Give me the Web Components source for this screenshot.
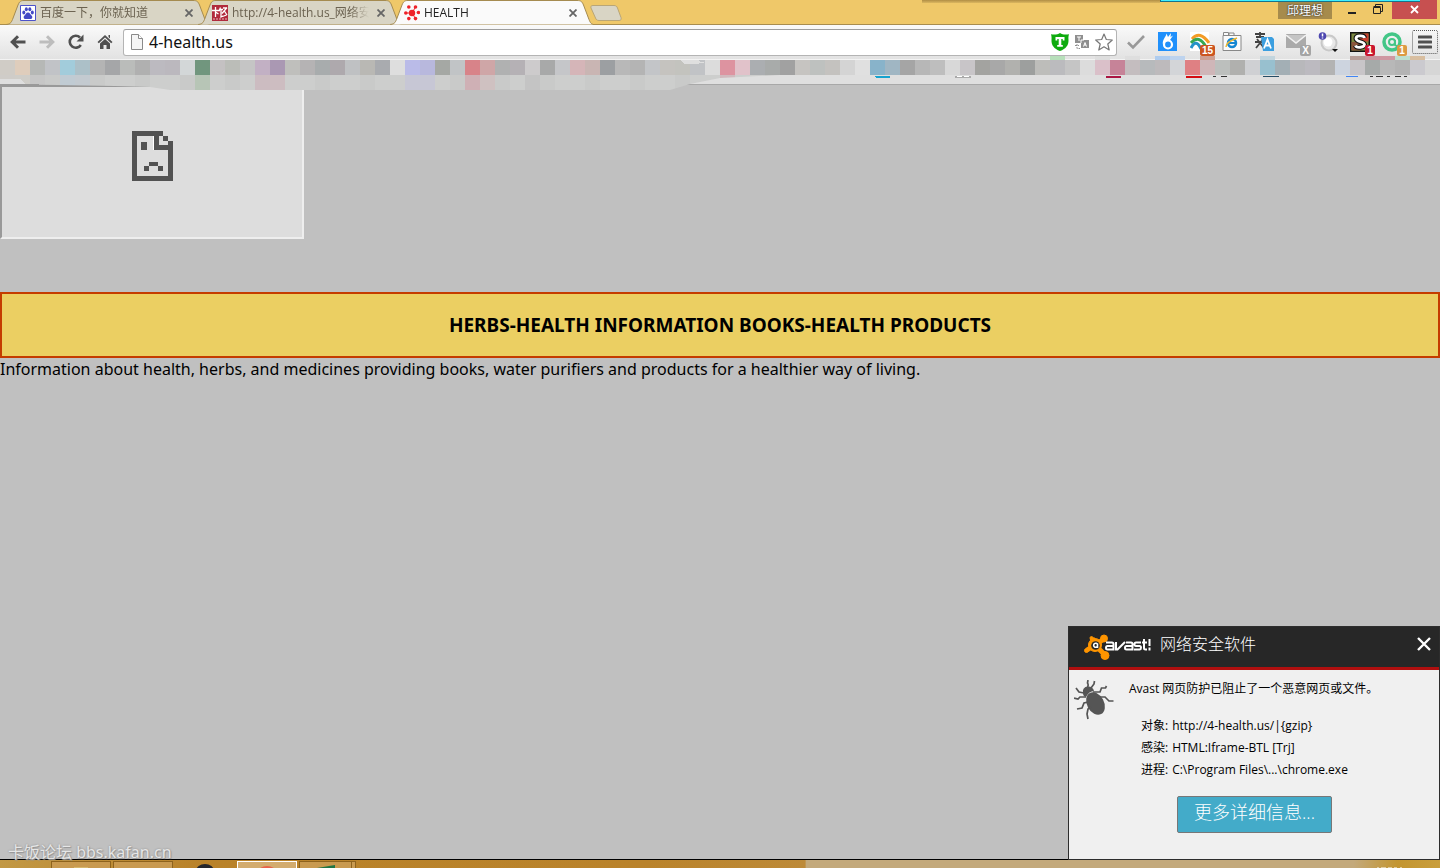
<!DOCTYPE html>
<html lang="zh-CN">
<head>
<meta charset="utf-8">
<title>HEALTH</title>
<style>
html, body { margin: 0; height: 100%; overflow: hidden; background: #c0c0c0; font-family: "Open Sans", "Noto Sans CJK SC", sans-serif; }
</style>
</head>
<body>
<browser-window></browser-window>
<script>
const define = (name, html, setup) => {
  const tpl = document.createElement('template');
  tpl.innerHTML = html;
  customElements.define(name, class extends HTMLElement {
    constructor() {
      super();
      this.attachShadow({ mode: 'open' }).append(tpl.content.cloneNode(true));
    }
    connectedCallback() { if (setup) setup(this, this.shadowRoot); }
  });
};

/* One tab of the strip: slots for the favicon and the title. */
define('browser-tab', `
<style>
:host { display: grid; grid-template-columns: 100%; width: 203px; height: 25px; margin-right: -11px; flex: none; --fill: #d9d5c5; color: #6b6250; position: relative; }
:host([active]) { --fill: #fafafa; color: #222; z-index: 2; }
.shape, .row { grid-area: 1 / 1; }
.shape { display: block; fill: var(--fill); stroke: #a58b50; }
.row { display: flex; align-items: center; gap: 4px; padding: 0 12px 0 14px; z-index: 1; }
.title { flex: 1; font-size: 12px; line-height: 24px; white-space: nowrap; overflow: hidden; -webkit-mask: linear-gradient(90deg, #000 86%, transparent); mask: linear-gradient(90deg, #000 86%, transparent); }
button { border: 0; padding: 0; background: none; width: 16px; height: 16px; color: #666; display: grid; place-items: center; }
::slotted(svg) { width: 16px; height: 16px; display: block; flex: none; }
</style>
<svg class="shape" width="203" height="25" viewBox="0 0 203 25"><path d="M-1 24.500C4 24.500 5 23 6.500 19.500L12 5C13.500 1.500 14.500.5 18 .5H187C191 .5 192 1.500 193.500 5L199 19.500C200.500 23 201 24.500 205 24.500"/></svg>
<div class="row"><slot name="icon"></slot><span class="title"><slot></slot></span>
<button aria-label="关闭标签页"><svg width="8" height="8" viewBox="0 0 8 8"><path d="M.5.5l7 7M7.500.5l-7 7" stroke="currentColor" stroke-width="1.800"/></svg></button></div>`);

define('window-controls', `
<style>
:host { display: flex; align-items: flex-start; height: 25px; padding-right: 3px; position: relative; z-index: 3; }
button { border: 0; padding: 0; margin: 0; background: none; height: 19px; width: 26px; display: grid; place-items: center; }
.user { width: 54px; background: #a68b4c; color: #fff; font: 12px/18px "Noto Sans CJK SC", sans-serif; text-shadow: 0 0 2px #333, 0 0 1px #333; margin-right: 7px; }
.close { width: 45px; background: #c75050; margin-left: 1px; }
</style>
<button class="user">邱理想</button>
<button aria-label="最小化"><svg width="10" height="12"><path d="M1 8h8v2h-8z" fill="#222"/></svg></button>
<button aria-label="还原"><svg width="11" height="11" fill="none" stroke="#222"><path d="M.5 3.500h7v6h-7zM.5 2.500h7M2.500 2V.5h7v7H8"/></svg></button>
<button class="close" aria-label="关闭"><svg width="9" height="9"><path d="M1 1l7 7M8 1l-7 7" stroke="#fff" stroke-width="1.800"/></svg></button>`);

define('tab-strip', `
<style>
:host { display: flex; height: 25px; background: #efc869; padding-left: 6px; position: relative; box-sizing: border-box; box-shadow: inset 0 -1px #a98d4e; }
.new { border: 0; background: none; padding: 0; margin: 5px 0 0 11px; width: 32px; height: 16px; }
.new svg { display: block; margin-left: -3px; }
.gap { flex: 1; }
.edge { position: absolute; right: 20px; top: 0; width: 260px; height: 2px; box-sizing: border-box; background: #3ff0ff; border-bottom: 1px solid #17738a; border-left: 1px solid #17738a; z-index: 4; }
.shade { position: absolute; right: 280px; top: 0; width: 238px; height: 3px; background: linear-gradient(#b08e45, #dcb760); }
</style>
<browser-tab><svg slot="icon" viewBox="0 0 16 16"><path d="M.5.5h15v15H.5z" fill="#fff" stroke="#4d52c9"/><g fill="#4349c5"><ellipse cx="3.800" cy="7.500" rx="1.500" ry="2"/><ellipse cx="6.300" cy="4.300" rx="1.500" ry="2"/><ellipse cx="9.800" cy="4.300" rx="1.500" ry="2"/><ellipse cx="12.300" cy="7.500" rx="1.500" ry="2"/><path d="M8 7.500c2 0 2 1.800 3.500 3 1.500 1.300.8 3.600-1 3.600H5.500c-1.800 0-2.500-2.300-1-3.600C6 9.300 6 7.500 8 7.500z"/></g></svg>百度一下，你就知道</browser-tab>
<browser-tab><svg slot="icon" viewBox="0 0 16 16"><path d="M0 0h16v16H0z" fill="#b12a3c"/><path d="M0 5.500h8M3.500 2v10M3.500 7l3 2M8.500 2.500L7 6M8 4.500h3M9 5v7l2-1M11 3h4M15 2.500L10 8.500M12 5.500l3 4.500M10.500 11.500l4-1.500" fill="none" stroke="#fff" stroke-width="1.300"/><path d="M1 14h14" stroke="#e9b9be" stroke-dasharray="2 1"/></svg>http://4-health.us_网络安</browser-tab>
<browser-tab active><svg slot="icon" viewBox="0 0 16 16" fill="#ee2229"><circle cx="8" cy="8" r="3.200"/><circle cx="4.800" cy="2" r="1.800"/><circle cx="11.500" cy="2" r="1.800"/><circle cx="1.800" cy="8" r="1.800"/><circle cx="14.400" cy="7.500" r="1.800"/><circle cx="4.800" cy="13.600" r="1.800"/><circle cx="11.500" cy="13.600" r="1.800"/><path d="M8 8l3.500-6M8 8L1.800 8M8 8l3.500 5.600" stroke="#ee2229"/></svg>HEALTH</browser-tab>
<button class="new" aria-label="新标签页"><svg width="32" height="16"><path d="M3 .5H24C26 .5 27 1.500 27.500 3L31 12.500C31.500 14.500 31 15.500 29 15.500H9C7 15.500 6 14.500 5.500 13L1 3C.5 1.500 1 .5 3 .5z" fill="#d9d5c5" stroke="#b9a677"/></svg></button>
<span class="gap"></span><window-controls></window-controls><span class="shade"></span><span class="edge"></span>`);

define('omni-box', `
<style>
:host { display: flex; align-items: center; flex: 1; min-width: 0; height: 27px; box-sizing: border-box; border: 1px solid #b4b4b4; border-top-color: #9d9d9d; border-radius: 3px; background: #fff; padding: 0 1px 0 7px; }
input { flex: 1; min-width: 0; border: 0; outline: 0; background: none; padding: 0; margin-left: 6px; height: 25px; font: 16px/24px "Noto Sans", sans-serif; color: #111; }
button { border: 0; background: none; padding: 0; display: grid; place-items: center; width: 22px; height: 22px; }
</style>
<svg width="12" height="16" viewBox="0 0 12 16"><path d="M.5.5h7l4 4v11H.5z" fill="#f5f5f5" stroke="#8a8a8a"/><path d="M7.500.5v4h4" fill="#fff" stroke="#8a8a8a"/></svg>
<input aria-label="地址" value="4-health.us">
<button aria-label="信任"><svg width="18" height="18" viewBox="0 0 18 18"><path d="M9 0c2.500 1.500 5 2 9 1.200-.5 1.500-.7 3-.5 5.500.3 5.500-2.500 9-8.500 11.300C3 15.700.2 12.200.5 6.700.7 4.200.5 2.700 0 1.200 4 2 6.500 1.500 9 0z" fill="#0eab0e"/><path d="M4.500 4h9v3.500h-1.800V6h-1.400v6h1.500v1.800H6.200V12h1.500V6H6.300v1.500H4.500z" fill="#fff"/></svg></button>
<button aria-label="翻译"><svg width="14" height="14" viewBox="0 0 14 14"><path d="M0 0h8v8H0zM6 5h8v8H6z" fill="#8f8f8f"/><path d="M6 8V5h3" stroke="#fff" fill="none"/><path d="M2 2h4M4 2v4M8.500 11.500L10 7.500l1.500 4M9 10h2" stroke="#fff" fill="none"/><path d="M0 10.500h4M2 9v4.500h3" stroke="#8f8f8f" fill="none" stroke-dasharray="2 1"/></svg></button>
<button aria-label="收藏"><svg width="18" height="18" viewBox="0 0 18 18"><path d="M9 1l2.300 5.500 6 .5-4.500 4 1.400 6L9 13.800 3.800 17l1.400-6L.7 7l6-.5z" fill="#fff" stroke="#777" stroke-width="1.200" stroke-linejoin="round"/></svg></button>`);

define('extension-button', `
<style>
:host { display: block; position: relative; width: 32px; height: 24px; flex: none; }
button { border: 0; background: none; padding: 0; width: 100%; height: 100%; display: grid; place-items: center; }
.badge { position: absolute; right: 1px; bottom: -2px; min-width: 6px; padding: 0 2px; border-radius: 2px; font: bold 10px/11px "Liberation Sans", sans-serif; text-align: center; color: #fff; background: var(--badge, #999); }
.badge:empty { display: none; }
</style><button><slot></slot></button><span class="badge"></span>`, (host, root) => {
  root.querySelector('.badge').textContent = host.getAttribute('badge') || '';
  root.querySelector('button').setAttribute('aria-label', host.getAttribute('label'));
});

define('tool-bar', `
<style>
:host { display: flex; align-items: center; height: 35px; box-sizing: border-box; padding: 0 2px 0 3px; background: linear-gradient(#fafafa, #e2e2e2); border-bottom: 1px solid #f3f3f3; }
.nav { border: 0; background: none; padding: 0; width: 29px; height: 24px; display: grid; place-items: center; }
omni-box { margin: 0 3px 0 4px; }
.menu { border: 1px dotted #555; background: none; border-radius: 2px; padding: 0; width: 26px; height: 24px; margin-left: 4px; display: grid; place-items: center; }
</style>
<button class="nav" aria-label="后退"><svg width="16" height="14" fill="none" stroke="#505050" stroke-width="3"><path d="M15.500 7H3M8 1.200L2.200 7 8 12.800"/></svg></button>
<button class="nav" aria-label="前进"><svg width="16" height="14" fill="none" stroke="#bdbdbd" stroke-width="3"><path d="M.5 7H13M8 1.200L13.800 7 8 12.800"/></svg></button>
<button class="nav" aria-label="重新加载"><svg width="16" height="16"><path d="M12.800 11A6 6 0 1 1 12 3.500" fill="none" stroke="#505050" stroke-width="2.600"/><path d="M15.500.5v7h-7z" fill="#505050"/></svg></button>
<button class="nav" aria-label="主页"><svg width="16" height="16" fill="#505050"><path d="M8 1l7.500 7-1.300 1.300L8 3.600 1.800 9.300.5 8zM11.500 1H13v3.500l-1.500-1.500z"/><path d="M8 5l5 4.500V15H9.500v-4h-3v4H3V9.500z"/></svg></button>
<omni-box></omni-box>
<extension-button label="勾选"><svg width="20" height="18"><path d="M2 9.500l5 5L18 3" fill="none" stroke="#999" stroke-width="2.600"/></svg></extension-button>
<extension-button label="火焰"><svg width="20" height="20"><path d="M0 0h19v19H0z" fill="#2090fb"/><circle cx="10" cy="12.500" r="4" fill="none" stroke="#fff" stroke-width="2.200"/><path d="M4.800 12C4.500 7 8 5 8.500 1.500L10 5l3-4-.5 4L15 3.500 12 8 8 9.500z" fill="#fff"/></svg></extension-button>
<extension-button label="彩虹" badge="15" style="--badge:#cc5520"><svg width="20" height="20" fill="none" stroke-width="3"><path d="M0 0h19v19H0z" fill="#fff"/><path d="M2 7Q10-2 19 11" stroke="#f39b25"/><path d="M1 11Q9 2 16 15" stroke="#36a852"/><path d="M1 16Q6 6 11 17" stroke="#2592c8"/></svg></extension-button>
<extension-button label="IE 标签"><svg width="20" height="20"><path d="M1 3.500h18v15H1zM1.500 3V.5h5V3M7 3V1h5v2" fill="#fafafa" stroke="#888"/><circle cx="10" cy="11" r="4" fill="none" stroke="#1687d2" stroke-width="2.500"/><path d="M7 11h7" stroke="#1687d2" stroke-width="2"/><path d="M4 15Q4 10 15 6" fill="none" stroke="#f0b72d" stroke-width="1.500"/></svg></extension-button>
<extension-button label="翻译"><svg width="20" height="20"><path d="M1 2h10M6 0v5M2 5h8M3 7l7 9M10 6L2 16M1 10h9" stroke="#444" stroke-width="1.800" fill="none"/><path d="M7 5h11l2 2v12H9z" fill="#3c9fe0"/><path d="M10 16.500l3.500-9 3.500 9M11.500 13.500h4" stroke="#fff" stroke-width="1.800" fill="none"/></svg></extension-button>
<extension-button label="邮件" badge="X" style="--badge:#a5a5a5"><svg width="20" height="20"><path d="M0 2h20v14H0z" fill="#aaa"/><path d="M0 3l10 8 10-8" fill="#c5c5c5" stroke="#f2f2f2" stroke-width="1.500"/></svg></extension-button>
<extension-button label="代理"><svg width="20" height="20"><circle cx="11" cy="11" r="7.500" fill="#e8e8e8" stroke="#c8c8c8" stroke-width="2"/><circle cx="10" cy="10" r="4.500" fill="#fff"/><circle cx="4.500" cy="4" r="3.800" fill="#4d47b0"/><path d="M4.500 1.500v3M4.500 5.500v1" stroke="#fff" stroke-width="1.500"/><path d="M14 17h6l-3 3z" fill="#111"/></svg></extension-button>
<extension-button label="脚本" badge="1" style="--badge:#c9152e"><svg width="20" height="20"><path d="M.7.7h18.600v18.600H.7z" fill="#7d8a42" stroke="#111" stroke-width="1.500"/><path d="M10 1.500h8.500v8H10z" fill="#c9402e"/><path d="M1.500 10H10v8.500H1.500z" fill="#8a553a"/><path d="M14.500 6C14 3 6 3 6 6.500s8.500 3 8.500 6-8 4-9 1" fill="none" stroke="#111" stroke-width="5"/><path d="M14.500 6C14 3 6 3 6 6.500s8.500 3 8.500 6-8 4-9 1" fill="none" stroke="#fff" stroke-width="2.800"/></svg></extension-button>
<extension-button label="网络" badge="1" style="--badge:#dc9a42"><svg width="20" height="20"><circle cx="10" cy="10" r="8" fill="none" stroke="#43c687" stroke-width="3.500"/><circle cx="10" cy="10" r="3" fill="none" stroke="#43c687" stroke-width="2"/><path d="M13 8v5l5 3" fill="none" stroke="#43c687" stroke-width="2"/></svg></extension-button>
<button class="menu" aria-label="菜单"><svg width="14" height="14"><path d="M1 2h12M1 7h12M1 12h12" stroke="#505050" stroke-width="3" stroke-linecap="round"/></svg></button>`);

/* Bookmarks bar, with a pixelated strip drawn over its entries. */
define('bookmarks-bar', `
<style>
:host { display: block; height: 25px; box-sizing: border-box; background: #dfdfdf; border-bottom: 1px solid #a8a8a8; position: relative; z-index: 2; }
svg { position: absolute; left: 0; top: -4px; width: 1440px; height: 36px; }
</style>
<svg viewBox="0 56 1440 36" shape-rendering="crispEdges"><defs><clipPath id="c"><path d="M0 75H780L720 78 690 84 670 90H170L150 87 115 86 0 84z"/></clipPath></defs>
<g id="top"></g><g id="low" clip-path="url(#c)"></g>
<path d="M0 79h20l5 5H0z" fill="#dedede"/><path d="M0 84h39v1h8v1H0z" fill="#999"/>
<path d="M680 60h18l3 2h5l-10 2h-11z" fill="#dfdfdf"/>
<path d="M874 76h16v2h-14z" fill="#16a3cf"/><path d="M955 76h16v2h-16z" fill="#aaa"/><path d="M957 76h5v1h-5zM964 76h5v1h-5z" fill="#fff"/><path d="M1106 76h15v2h-15z" fill="#ab1543"/><path d="M1186 76h16v2h-16z" fill="#d50c12"/><path d="M1263 76h16v1h-16z" fill="#254d66"/><path d="M1346 76h12v1h-12z" fill="#4285f4"/>
<path d="M1213 76h3m5 0h6m143 0h3m3 0h7m4 0h3m5 0h6m3 0h3" stroke="#333" stroke-width="1"/></svg>`, (host, root) => {
  const top = 'd0ccc6 dfcdbc b6b8b6 c1c3c7 a2ccdb acc0c8 b4b4b4 a5a6a8 babcba b0b0b0 bcbac0 bbb8be d3d7d8 71967e c4c1c2 bbbdb8 c5c5c5 c2b0c4 aa98b3 bfbfbc b5b3b4 a8acad aea9ad bfc1c3 b9b8b4 a9abaf dedede babbe8 b8b8dd a5a8a4 c1c4c6 d88389 cfa6a7 b0b1b1 b5b1b5 cdcbcc a8a9a9 c5c6c9 d5b5b8 c9b5b3 9c9fa2 b8b8b8 b4b4b4 c3c5c8 c5c3bf c3c3be c1c3c6 dcdcdc dd93a0 e1c2ca abaeb1 a8abaa a1a1a1 c6c4c1 bec1bf c4c2bf d4d4d4 e0e0e0 88b3ca a0b6c3 a5a5a5 b7b7b7 bebebe d8d8d8 c8c5c8 a3a3a0 a8a8a8 b1b1ae 9d9f9e bdbdba bbbbbe c5c5c5 dcdcdc dac0c9 c68398 c4bdbf b7babc bdbabc d3d5d8 df8083 cfb6b8 bcbfbd b0b0ae cfd0d3 98c0cf a3afb5 b8b8bb bcbac0 b3b3b3 cdd4df c8c5c8 a6aaa9 b8b8b8 b3b3b3 cbcacf d6d6d6'.split(' ');
  const low = { 0: 'cfccc8', 1: 'cfcdc8', 2: 'c6c6c6', 4: 'c0cbd3', 5: 'c3cad0', 13: 'b7c5b6', 17: 'ccbcc1', 18: 'cdbdc1', 27: 'c7c7d5', 28: 'c7c7d5', 31: 'cfb0b5', 32: 'cfc1c1', 35: 'c4c4c4', 48: 'd0b9bd' };
  const above = { 70: 'b7dfba', 73: 'dedede', 75: 'dedede', 77: 'aeccef', 78: 'bdd3ee', 80: 'cf9f92', 84: 'c2d5de', 90: 'b69d98', 91: 'c9959f', 92: 'cf97a2', 93: 'bddfce', 94: 'd8bea0' };
  const cell = (x, y, h, c) => `<rect x="${x * 15}" y="${y}" width="15" height="${h}" fill="#${c}"/>`;
  root.getElementById('top').innerHTML = top.map((c, i) => cell(i, 60, 15, c)).join('') + Object.entries(above).map(([i, c]) => cell(+i, 56, 4, c)).join('');
  root.getElementById('low').innerHTML = top.map((c, i) => cell(i, 75, 15, low[i] || (i % 3 ? 'cdcecd' : 'c9cac9'))).join('');
});

define('broken-frame', `
<style>
:host { display: grid; place-items: center; width: 300px; height: 150px; background: #ddd; border: 2px solid; border-color: #999 #eee #eee #999; }
svg { display: block; margin-bottom: 12px; }
</style>
<svg width="41" height="50" viewBox="0 0 41 50" shape-rendering="crispEdges"><path fill="#525252" fill-rule="evenodd" d="M0 0H31V5H36V10H41V50H0zM5 5V45H36V19H22V5zM27 5V14H36V10H31V5z"/><path fill="#525252" d="M9 11h6v8H9zM17 31h9v4h-9zM12 35h5v5h-5zM26 35h5v5h-5z"/><path fill="#fff" d="M21 5h1v14h-1z"/></svg>`);

define('health-page', `
<style>
:host { display: block; flex: 1; min-height: 0; overflow: hidden; background: #c0c0c0; color: #000; font-family: "Noto Sans", sans-serif; }
.box { margin-top: 53px; border: 2px solid #c43c00; background: #ebcf62; padding: 19px 0; text-align: center; }
h3 { margin: 0; font-size: 19px; line-height: 24px; font-weight: 700; }
p { margin: 0; font-size: 16px; line-height: 22px; }
</style>
<broken-frame></broken-frame>
<div class="box"><h3>HERBS-HEALTH INFORMATION BOOKS-HEALTH PRODUCTS</h3></div>
<p>Information about health, herbs, and medicines providing books, water purifiers and products for a healthier way of living.</p>`);

define('avast-alert', `
<style>
:host { display: block; position: absolute; right: 0; bottom: 8px; width: 372px; height: 234px; box-sizing: border-box; border: 1px solid #2d2d2d; background: #f0f0f0; color: #000; z-index: 5; font: 12px/22px "Open Sans", "Noto Sans CJK SC", sans-serif; }
header { display: flex; align-items: center; height: 40px; background: #272727; border-bottom: 3px solid #b00f0f; color: #fff; padding: 0 8px 0 15px; }
header h2 { margin: 0 0 8px 9px; flex: 1; font: 300 16px/24px "Noto Sans CJK SC", sans-serif; }
button { border: 0; background: none; padding: 0; font: inherit; color: inherit; }
.x { margin-bottom: 6px; display: block; }
.x svg, header > svg { display: block; }
main { display: grid; grid-template-columns: 60px 1fr; padding-top: 8px; }
main > svg { margin: 2px 0 0 5px; }
p { margin: 0; }
dl { display: grid; grid-template-columns: auto 1fr; gap: 0 4px; margin: 15px 0 0 12px; }
dt, dd { margin: 0; line-height: 22px; }
.more { display: block; width: 155px; height: 37px; margin: 15px 0 0 48px; padding-bottom: 6px; background: #43abc9; border: 1px solid #777; border-radius: 2px; color: #fff; font: 300 18px/28px "Open Sans", "Noto Sans CJK SC", sans-serif; }
</style>
<header>
<svg width="67" height="27" viewBox="0 0 67 27"><g fill="#ff9500" stroke="#ff9500"><circle cx="11" cy="11" r="6.500"/><circle cx="20" cy="4.500" r="3.500"/><circle cx="21" cy="21.500" r="4"/><circle cx="2.500" cy="16.500" r="2"/><circle cx="7.500" cy="4" r="1.500"/><path d="M11 11l9-6M12 12l8 8M11 11L3 16M11 11L8 4" stroke-width="5"/></g><circle cx="11.500" cy="11.500" r="4.300" fill="#272727"/><path d="M13.500 9.500v4.500M13.500 12a2 2 0 1 1 0-1.500" stroke="#fff" stroke-width="1.600" fill="none"/>
<g fill="none" stroke="#fff" stroke-width="2"><path d="M22 8.500h6q1.500 0 1.500 1.500v5.500h-6q-1.500 0-1.500-1.500 0-2 1.500-2h6M32 8v7.500h1.500L41 8M42 8.500h5q1.500 0 1.500 1.500v5.500h-6q-1.500 0-1.500-1.500 0-2 1.500-2h6M57 8.500h-5q-1.500 0-1.500 1.800T52 12h3.500q1.500 0 1.500 1.700t-1.500 1.800H50M60 5v9q0 1.500 1.500 1.500H63M58 8.500h5M65.500 5v7M65.500 13.500v3"/></g></svg>
<h2>网络安全软件</h2>
<button class="x" aria-label="关闭"><svg width="14" height="14"><path d="M1 1l12 12M13 1L1 13" stroke="#fff" stroke-width="2.400"/></svg></button>
</header>
<main>
<svg width="40" height="40" viewBox="0 0 40 40"><g fill="#555"><ellipse cx="21.500" cy="23.500" rx="8.500" ry="12" transform="rotate(-28 21.500 23.500)"/><path d="M9 13q-1-6 5-6.500 5 0 6 4.500-5 0-8 6-3-.5-3-4z"/></g><g fill="none" stroke="#555" stroke-width="1.700"><path d="M13 8q2-3 .5-5l.5-3M17 8l3-4 .5-3M19 12l7 0 1.500-4 4 0 1-2M25 17h6l4 4 4.500 0M10 13l-5-1-3-4M12 17l-6 0-2 2-4-1M14 22l-4 1-2 5-5 1M17 27l-3 2-1 5 1 5"/></g></svg>
<div><p>Avast 网页防护已阻止了一个恶意网页或文件。</p>
<dl><dt>对象:</dt><dd>http://4-health.us/|{gzip}</dd><dt>感染:</dt><dd>HTML:Iframe-BTL [Trj]</dd><dt>进程:</dt><dd>C:\\Program Files\\...\\chrome.exe</dd></dl>
<button class="more">更多详细信息...</button></div>
</main>`);

define('task-bar', `
<style>
:host { display: flex; height: 9px; box-sizing: border-box; border-top: 1px solid #000; background: linear-gradient(90deg, #c29844, #b98229 14%, #ba832b 45%, #bd8a38 55.900%, #c3a97b 56%, #c3a97b 94%, #c39530 97%, #c99e3c); padding-left: 51px; gap: 2px; overflow: hidden; }
button { flex: none; width: 60px; height: 20px; padding: 0; border: 1px solid #dcb77c; outline: 1px solid #8e631d; outline-offset: -1px; background: #c99a50; margin: 1px 0 0; display: flex; justify-content: center; align-items: flex-start; }
.plain { border-color: transparent; outline: 0; background: none; }
.on { background: #d3ac6f; border-color: #fff; outline: 0; }
.half { width: 53px; margin-right: -3px; }
.sliver { width: 5px; margin-right: -2px; }
svg { display: block; }
.gap { flex: 1; }
.clock { flex: none; margin: 6px 38px 0 0; }
</style>
<button aria-label="文件夹"><svg width="18" height="8"><path d="M2 8V5h14v3z" fill="#d8b76c"/></svg></button>
<button aria-label="窗口"></button>
<button class="plain" aria-label="QQ"><svg width="18" height="8"><ellipse cx="9" cy="9" rx="9" ry="7" fill="#24262c"/></svg></button>
<button class="on" aria-label="Chrome"><svg width="18" height="8"><ellipse cx="9" cy="10" rx="9" ry="6" fill="#e9624a"/></svg></button>
<button class="half" aria-label="表格"><svg width="18" height="8"><path d="M0 6l18-3v5H0z" fill="#1f7545"/></svg></button><button class="sliver" aria-label="更多窗口"></button>
<span class="gap"></span><svg class="clock" width="26" height="3"><path d="M1 2h2M5 2h5M12 2h4M18 2h3M24 2h2" stroke="#fff" stroke-width="1"/></svg>`);

define('browser-window', `
<style>
:host { display: flex; flex-direction: column; height: 100vh; position: relative; overflow: hidden; }
.mark { position: absolute; left: 8px; bottom: 5px; font: 16px/22px "Noto Sans", "Noto Sans CJK SC", sans-serif; color: #e6e6e6; text-shadow: 0 0 2px #888, 1px 1px 1px #999; }
tab-strip, tool-bar, bookmarks-bar, task-bar { flex: none; }
</style>
<tab-strip></tab-strip><tool-bar></tool-bar><bookmarks-bar></bookmarks-bar><health-page></health-page><task-bar></task-bar>
<span class="mark">卡饭论坛 bbs.kafan.cn</span><avast-alert></avast-alert>`);
</script>
</body>
</html>
